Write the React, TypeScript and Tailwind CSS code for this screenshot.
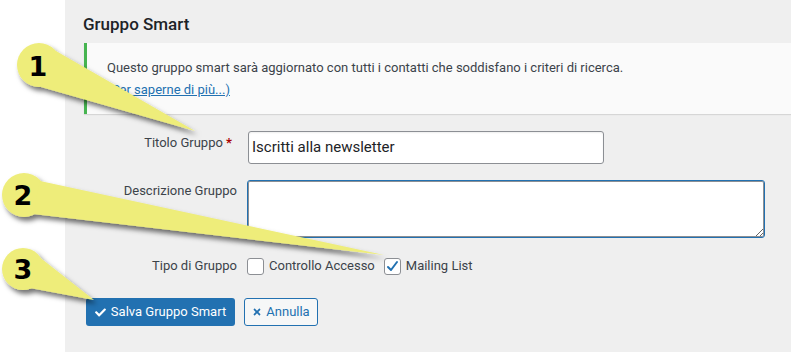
import { FaCheck, FaTimes } from "react-icons/fa";

function Callouts() {
  return (
    <svg
      className="absolute left-0 top-0 pointer-events-none"
      width={791}
      height={352}
      viewBox="0 0 791 352"
    >
      <defs>
        <filter id="sh" x="-20%" y="-20%" width="140%" height="160%">
          <feDropShadow dx="3" dy="4" stdDeviation="2.5" floodColor="#000" floodOpacity="0.55" />
        </filter>
      </defs>
      <g filter="url(#sh)" fill="#eeed7a">
        <circle cx="39" cy="65" r="22" />
        <polygon points="56,51 195,131 41,87" />
      </g>
      <g filter="url(#sh)" fill="#eeed7a">
        <circle cx="24" cy="195" r="22" />
        <polygon points="40,181 384,255 33,214" />
      </g>
      <g filter="url(#sh)" fill="#eeed7a">
        <circle cx="23" cy="269" r="21" />
        <polygon points="38,256 94,300 30,288" />
      </g>
      <g fill="#000" fontFamily="'DejaVu Sans', sans-serif" fontWeight="bold" fontSize="27" textAnchor="middle">
        <text x="38" y="76">1</text>
        <text x="23" y="205">2</text>
        <text x="23" y="279">3</text>
      </g>
    </svg>
  );
}

function Box({ checked }: { checked?: boolean }) {
  return (
    <span className="w-[17px] h-[17px] shrink-0 rounded-[3px] border border-[#8c8f94] bg-white flex items-center justify-center">
      {checked && (
        <svg width="13" height="13" viewBox="0 0 13 13">
          <path d="M2 7 L5 10 L11 2" fill="none" stroke="#2271b1" strokeWidth="2" strokeLinecap="round" strokeLinejoin="round" />
        </svg>
      )}
    </span>
  );
}

export default function App() {
  return (
    <div className="relative w-[791px] h-[352px] overflow-hidden bg-white font-['Roboto','Noto_Sans',sans-serif]">
      <div className="flex h-[352px] w-[791px]">
        <div className="w-[65px] shrink-0 bg-white" />
        <div className="flex-1 bg-[#efefef] pl-[18px] pt-[13px]">
          <h2 className="text-[17px] leading-[22px] font-medium text-[#1d2327]">Gruppo Smart</h2>
          <div className="mt-[8px] ml-[1px] h-[71px] bg-[#fafafa] border-l-[3px] border-[#46b450] pl-[20px] pt-[15px] shadow-[0_1px_1px_rgba(0,0,0,0.1)]">
            <p className="text-[13px] leading-[20px] text-[#3c434a]">
              Questo gruppo smart sarà aggiornato con tutti i contatti che soddisfano i criteri di ricerca.
            </p>
            <a className="block mt-[2px] text-[13px] leading-[20px] text-[#2271b1] underline">(Per saperne di più...)</a>
          </div>

          <div className="mt-[17px] grid grid-cols-[154px_1fr] gap-x-[10px]">
            <div className="pt-[2px] pr-[5px] text-right text-[13px] leading-[20px] text-[#3c434a]">
              Titolo Gruppo <span className="text-[#a00] font-bold">*</span>
            </div>
            <div className="ml-[1px] w-[356px] h-[33px] rounded-[3px] border border-[#8c8f94] bg-white shadow-[inset_0_1px_2px_rgba(0,0,0,0.07)] flex items-center pl-[3px] text-[15px] text-[#1d2327]">
              Iscritti alla newsletter
            </div>

            <div className="mt-[16px] pt-[1px] text-right text-[13px] leading-[20px] text-[#3c434a]">
              Descrizione Gruppo
            </div>
            <textarea
              className="mt-[16px] w-[518px] h-[58px] rounded-[3px] border border-[#2271b1] bg-white shadow-[0_0_0_1px_#8c8f94_inset] outline-none"
              defaultValue=""
            />

            <div className="mt-[18px] h-[20px] flex items-center justify-end text-[13px] text-[#3c434a]">
              Tipo di Gruppo
            </div>
            <div className="mt-[18px] h-[20px] flex items-center text-[13px] text-[#3c434a]">
              <Box />
              <span className="ml-[5px]">Controllo Accesso</span>
              <span className="ml-[9px]"><Box checked /></span>
              <span className="ml-[5px]">Mailing List</span>
            </div>
          </div>

          <div className="mt-[22px] ml-[3px] flex gap-[9px]">
            <button className="h-[28px] w-[149px] rounded-[3px] bg-[#2271b1] text-white text-[13px] flex items-center justify-center gap-[5px]">
              <FaCheck className="w-[11px] h-[11px]" />
              Salva Gruppo Smart
            </button>
            <button className="h-[28px] w-[74px] rounded-[3px] border border-[#2271b1] bg-[#f6f7f7] text-[#2271b1] text-[13px] flex items-center justify-center gap-[4px]">
              <FaTimes className="w-[10px] h-[10px]" />
              Annulla
            </button>
          </div>
        </div>
      </div>
      <Callouts />
    </div>
  );
}
